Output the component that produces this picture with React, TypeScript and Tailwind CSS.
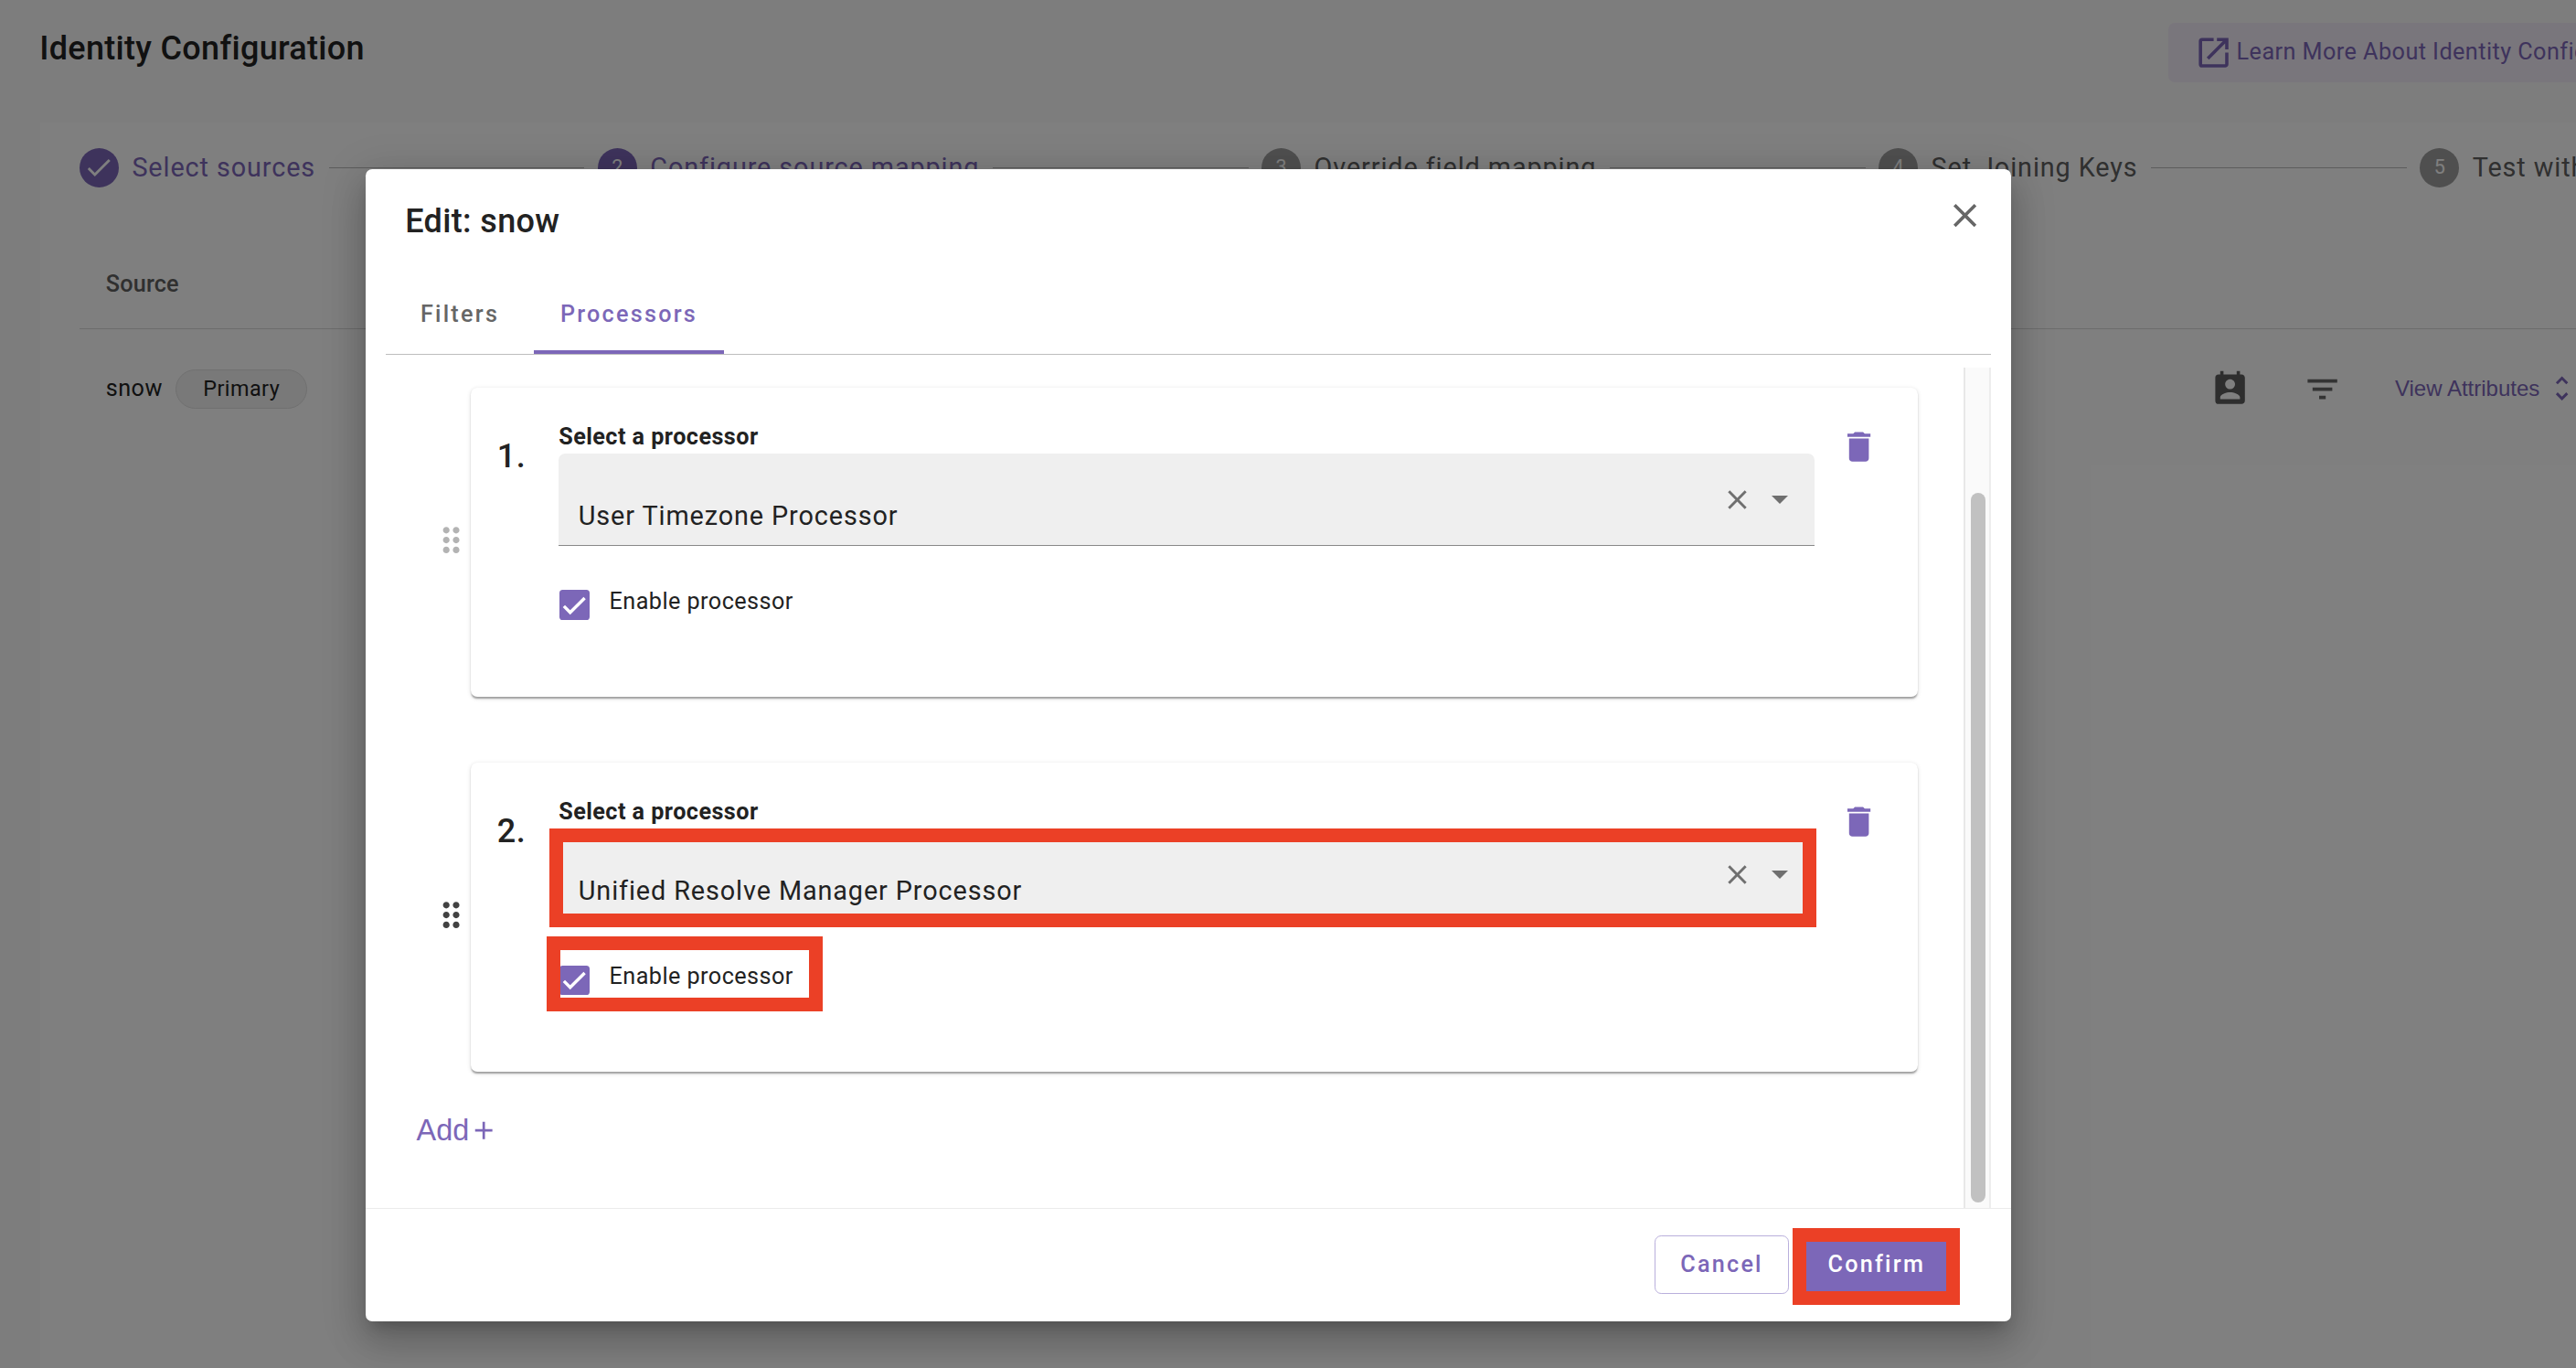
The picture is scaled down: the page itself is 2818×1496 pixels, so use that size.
import {
  MdAdd,
  MdCheck,
  MdClose,
  MdDelete,
  MdDragIndicator,
  MdFilterList,
  MdOpenInNew,
  MdPermContactCalendar,
  MdUnfoldMore,
} from "react-icons/md";

const steps = [
  { label: "Select sources", state: "done" },
  { label: "Configure source mapping", state: "active" },
  { label: "Override field mapping", state: "todo" },
  { label: "Set Joining Keys", state: "todo" },
  { label: "Test with", state: "todo" },
];

function Header() {
  return (
    <header className="flex h-[134px] shrink-0 items-start pl-[43.2px]">
      <h1 className="mt-[32px] w-[2328.4px] shrink-0 text-[36px] leading-[43.2px] font-medium tracking-[0.31px] text-[#222]">
        Identity Configuration
      </h1>
      <a className="mt-[25px] flex h-[64.8px] w-[640px] shrink-0 items-center rounded-[7.2px] bg-[#f3ecf9] pl-[28.8px] text-[#7c67b8]">
        <MdOpenInNew className="size-[43.2px] shrink-0" />
        <span className="ml-[3px] pb-[1px] text-[25.2px] leading-[36px] tracking-[0.01786em] whitespace-nowrap">
          Learn More About Identity Configuration
        </span>
      </a>
    </header>
  );
}

function Stepper() {
  return (
    <ol className="flex h-[98.6px] items-center gap-[14.4px] pl-[42.8px]">
      {steps.map((step, i) => (
        <li key={step.label} className="flex shrink-0 items-center gap-[14.4px]">
          <span
            className={
              "flex size-[43.2px] shrink-0 items-center justify-center rounded-full text-[21.6px] text-white " +
              (step.state === "todo" ? "bg-[#9f9f9f]" : "bg-[#7c67b8]")
            }
          >
            {step.state === "done" ? <MdCheck className="size-[34px]" /> : i + 1}
          </span>
          <span
            className={
              "text-[28.8px] leading-[40px] tracking-[0.03125em] whitespace-nowrap " +
              (step.state === "todo" ? "text-[#606060]" : "text-[#7c67b8]")
            }
          >
            {step.label}
          </span>
          {i < steps.length - 1 && <span className="h-px w-[279.8px] shrink-0 bg-[#b8b8b8]" />}
        </li>
      ))}
    </ol>
  );
}

function SourceTable() {
  return (
    <div className="ml-[43px] w-[2800px]">
      <div className="flex h-[127px] items-center border-b border-[#d8d8d8] pt-[30px] pl-[28.8px] text-[25.2px] font-medium tracking-[0.0071em] text-[#606060]">
        Source
      </div>
      <div className="flex h-[131px] items-center pl-[28.8px] text-[25.2px] tracking-[0.01786em] text-[#222]">
        <span className="w-[76.4px]">snow</span>
        <span className="flex h-[43.2px] w-[144px] items-center justify-center rounded-full border border-[#e0e0e0] bg-[#f2f2f2] text-[23.4px]">
          Primary
        </span>
        <MdPermContactCalendar className="ml-[2082px] size-[43.2px] shrink-0 text-[#5c5c5c]" />
        <MdFilterList className="ml-[57.6px] size-[43.2px] shrink-0 text-[#666]" />
        <span className="ml-[57.8px] w-[165px] shrink-0 font-['Liberation_Sans',sans-serif] text-[24px] tracking-normal whitespace-nowrap text-[#7c67b8]">
          View Attributes
        </span>
        <MdUnfoldMore className="size-[35.3px] shrink-0 text-[#7c67b8]" />
      </div>
    </div>
  );
}

function Processor({
  index,
  name,
  muted,
  highlighted,
}: {
  index: number;
  name: string;
  muted?: boolean;
  highlighted?: boolean;
}) {
  return (
    <div className="flex items-center">
      <MdDragIndicator
        className={"mb-[5px] size-[43.2px] shrink-0 " + (muted ? "text-[#b3b3b3]" : "text-[#424242]")}
      />
      <section className="flex h-[338.4px] w-[1583px] items-start rounded-[7.2px] bg-white pl-[28.6px] shadow-[0_3.6px_1.8px_-1.8px_rgba(0,0,0,0.2),0_1.8px_1.8px_0_rgba(0,0,0,0.14),0_1.8px_5.4px_0_rgba(0,0,0,0.12)]">
        <span className="mt-[54.2px] w-[67.4px] shrink-0 text-[36px] leading-[43.2px] font-medium tracking-[0.0125em] text-[#222]">
          {index}.
        </span>
        <div className="relative w-[1373.8px] shrink-0 pt-[34.6px] text-[#222]">
          <div className="flex h-[37.8px] items-center pt-[1px] text-[25.2px] font-bold tracking-[0.01786em]">
            Select a processor
          </div>
          <div className="flex h-[100.8px] items-center rounded-t-[7.2px] border-b border-[#888] bg-[#efefef] pl-[21.6px]">
            <span className="grow pt-[36px] text-[28.8px] leading-[40px] tracking-[0.03125em]">{name}</span>
            <MdClose className="mt-[1px] size-[35px] shrink-0 text-[#6f6f6f]" />
            <svg viewBox="0 0 18 9" className="mt-[1px] mr-[29px] ml-[20px] h-[9px] w-[18px] shrink-0 fill-[#6f6f6f]">
              <path d="M0 0h18l-9 9z" />
            </svg>
          </div>
          <div className="mt-[43.2px] ml-px flex h-[43.2px] items-center">
            <span className="flex size-[32.4px] items-center justify-center rounded-[3.6px] bg-[#7c67b8]">
              <svg viewBox="0 0 24 24" className="size-[25.9px]">
                <path d="M1.73 12.91 8.1 19.28 22.79 4.59" fill="none" stroke="#fff" strokeWidth="3.12" />
              </svg>
            </span>
            <span className="ml-[22px] pb-[7.2px] text-[25.2px] leading-[36px] tracking-[0.01786em]">
              Enable processor
            </span>
          </div>
          {highlighted && (
            <>
              <span className="absolute top-[72px] left-[-10.2px] h-[107.6px] w-[1386px] border-[15px] border-[#eb4026]" />
              <span className="absolute top-[190px] left-[-12.9px] h-[81.6px] w-[301.5px] border-[15px] border-[#eb4026]" />
            </>
          )}
        </div>
        <MdDelete className="mt-[43.4px] ml-[27.4px] size-[43.2px] shrink-0 text-[#7c67b8]" />
      </section>
    </div>
  );
}

function Dialog() {
  return (
    <div
      role="dialog"
      className="absolute top-[185px] left-[400px] flex h-[1260px] w-[1800px] flex-col rounded-[7.2px] bg-white shadow-[0_11px_15px_-7px_rgba(0,0,0,0.2),0_24px_38px_3px_rgba(0,0,0,0.14),0_9px_46px_8px_rgba(0,0,0,0.12)]"
    >
      <div className="flex h-[116px] shrink-0 items-start justify-between pr-[29px] pl-[43.2px]">
        <h2 className="mt-[35.8px] text-[36px] leading-[43.2px] font-medium tracking-[0.01em] text-[#222]">
          Edit: snow
        </h2>
        <MdClose className="mt-[29.1px] size-[43.2px] text-[#666]" />
      </div>

      <div className="mx-[22px] flex h-[87px] shrink-0 border-b border-[#bdbdbd] text-[25.2px] font-medium tracking-[0.08929em]">
        <div className="flex w-[162px] items-center justify-center text-[#666]">Filters</div>
        <div className="flex w-[208px] items-center justify-center border-b-4 border-[#7c67b8] pt-[4px] text-[#7c67b8]">
          Processors
        </div>
      </div>

      <div className="mt-[14px] mr-[22px] flex h-[919px] shrink-0 justify-between">
        <div className="flex flex-col pt-[21.6px] pl-[72px]">
          <div className="flex flex-col gap-[72px]">
            <Processor index={1} name="User Timezone Processor" muted />
            <Processor index={2} name="Unified Resolve Manager Processor" highlighted />
          </div>
          <button className="mt-[44px] ml-[-16.4px] flex h-[40px] items-center font-['Liberation_Sans',sans-serif] text-[32.4px] text-[#7c67b8]">
            Add
            <MdAdd className="size-[32.4px]" />
          </button>
        </div>
        <div className="flex w-[30px] flex-col items-center border-r-2 border-l-2 border-r-[#ededed] border-l-[#e8e8e8] bg-[#fafafa] pt-[137px]">
          <span className="ml-[2px] h-[776px] w-[16px] rounded-full bg-[#c1c1c1]" />
        </div>
      </div>

      <div className="flex grow items-start border-t border-[#ebebeb] pt-[29px] pl-[1410px] text-[25.2px] font-medium tracking-[0.08929em]">
        <button className="flex h-[64px] w-[147px] items-center justify-center rounded-[7.2px] border border-[#b9afdc] pb-[1px] text-[#7c67b8]">
          Cancel
        </button>
        <div className="relative ml-[12.6px]">
          <button className="flex h-[64px] w-[164.4px] items-center justify-center rounded-[7.2px] bg-[#7c67b8] pb-[1px] pl-[2px] text-white">
            Confirm
          </button>
          <span className="absolute top-[-8px] left-[-8.4px] h-[84px] w-[182.5px] border-[15px] border-[#eb4026]" />
        </div>
      </div>
    </div>
  );
}

export default function App() {
  return (
    <div className="relative flex h-[1496px] w-[2818px] flex-col overflow-hidden bg-[#fafafa] font-[Roboto,sans-serif]">
      <Header />
      <main className="ml-[44px] w-[2900px] grow bg-white">
        <Stepper />
        <SourceTable />
      </main>
      <div className="absolute inset-0 bg-black/50" />
      <Dialog />
    </div>
  );
}
